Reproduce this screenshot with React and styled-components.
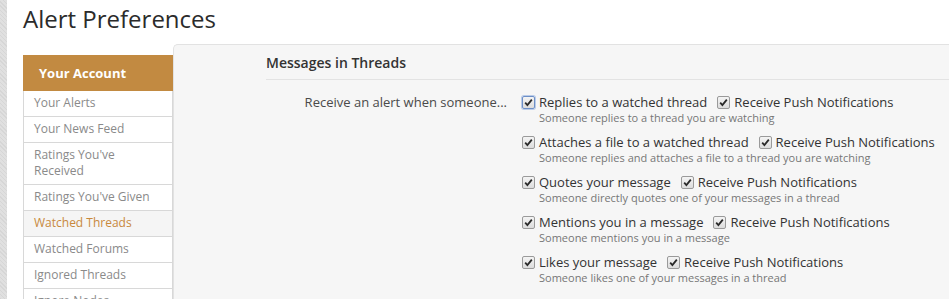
import React from 'react';
import styled, { createGlobalStyle } from 'styled-components';

const GlobalStyle = createGlobalStyle`
  html, body {
    margin: 0;
    padding: 0;
    background: #fff;
    font-family: "Open Sans", "Liberation Sans", sans-serif;
    overflow: hidden;
  }
`;

const Page = styled.div`
  display: flex;
  height: 299px;
  overflow: hidden;
`;

const Texture = styled.div`
  width: 7px;
  flex-shrink: 0;
  background: repeating-linear-gradient(45deg, #d6d6d6 0 1px, #e0e0e0 1px 3px);
`;

const Main = styled.div`
  flex: 1;
  padding: 0 0 0 16px;
  background: #fff;
  min-width: 0;
`;

const Title = styled.h1`
  margin: 0;
  padding: 2px 0 0;
  font-size: 24px;
  font-weight: 400;
  color: #2b2b2b;
  height: 42px;
  line-height: 34px;
`;

const Body = styled.div`
  display: flex;
  align-items: flex-start;
`;

const Sidebar = styled.div`
  width: 150px;
  flex-shrink: 0;
  margin-top: 11px;
`;

const SideHead = styled.div`
  background: #c28a41;
  color: #fff;
  font-weight: 700;
  font-size: 13px;
  height: 36px;
  line-height: 36px;
  padding-left: 16px;
`;

const SideItem = styled.div`
  border: 1px solid #d8d8d8;
  border-top: none;
  padding: 4px 10px 5px;
  font-size: 12px;
  line-height: 16px;
  white-space: nowrap;
  overflow: hidden;
  color: ${p => (p.$active ? '#c8893d' : '#8a8a8a')};
  background: ${p => (p.$active ? '#f5f5f5' : '#fff')};
`;

const SideText = styled.span`
  white-space: normal;
  display: inline-block;
  max-width: 128px;
`;

const Panel = styled.div`
  flex: 1;
  background: #f6f6f6;
  border: 1px solid #e2e2e2;
  border-right: none;
  border-radius: 5px 0 0 0;
  height: 260px;
  padding: 0 0 0 92px;
`;

const SectionHead = styled.h3`
  margin: 0;
  font-size: 14px;
  font-weight: 600;
  color: #333;
  padding: 7px 0 6px;
  line-height: 21px;
  border-bottom: 1px solid #e3e3e3;
`;

const FormRow = styled.div`
  display: flex;
  margin-top: 13px;
`;

const RowLabel = styled.div`
  width: 241px;
  text-align: right;
  font-size: 13px;
  color: #4a4a4a;
  line-height: 18px;
  padding-right: 15px;
  flex-shrink: 0;
`;

const Options = styled.div`
  display: flex;
  flex-direction: column;
  gap: 8px;
`;

const Option = styled.div`
  display: flex;
  flex-direction: column;
`;

const Line = styled.div`
  display: flex;
  align-items: center;
  height: 18px;
  font-size: 13px;
  color: #333;
  white-space: nowrap;
`;

const Box = styled.span`
  width: 11px;
  height: 11px;
  border: 1px solid ${p => (p.$focus ? '#6d8fc7' : '#9a9a9a')};
  box-shadow: ${p => (p.$focus ? '0 0 0 1px #b9cbe8' : 'none')};
  border-radius: 2px;
  background: linear-gradient(#f4f4f4, #dcdcdc);
  display: inline-flex;
  align-items: center;
  justify-content: center;
  margin-right: 4px;
  flex-shrink: 0;
`;

const Push = styled.span`
  display: inline-flex;
  align-items: center;
  margin-left: 10px;
`;

const Hint = styled.div`
  font-size: 11px;
  color: #777;
  line-height: 14px;
  padding-left: 17px;
`;

const Check = ({ focus }) => (
  <Box $focus={focus}>
    <svg width="9" height="9" viewBox="0 0 9 9">
      <path d="M1.2 4.6 L3.4 7 L7.8 1.6" fill="none" stroke="#2a2a2a" strokeWidth="1.8" />
    </svg>
  </Box>
);

const sideItems = [
  'Your Alerts',
  'Your News Feed',
  "Ratings You've Received",
  "Ratings You've Given",
  'Watched Threads',
  'Watched Forums',
  'Ignored Threads',
  'Ignore Nodes',
];

const options = [
  ['Replies to a watched thread', 'Someone replies to a thread you are watching'],
  ['Attaches a file to a watched thread', 'Someone replies and attaches a file to a thread you are watching'],
  ['Quotes your message', 'Someone directly quotes one of your messages in a thread'],
  ['Mentions you in a message', 'Someone mentions you in a message'],
  ['Likes your message', 'Someone likes one of your messages in a thread'],
];

export default function App() {
  return (
    <>
      <GlobalStyle />
      <Page>
        <Texture />
        <Main>
          <Title>Alert Preferences</Title>
          <Body>
            <Sidebar>
              <SideHead>Your Account</SideHead>
              {sideItems.map(item => (
                <SideItem key={item} $active={item === 'Watched Threads'}>
                  <SideText>{item}</SideText>
                </SideItem>
              ))}
            </Sidebar>
            <Panel>
              <SectionHead>Messages in Threads</SectionHead>
              <FormRow>
                <RowLabel>Receive an alert when someone...</RowLabel>
                <Options>
                  {options.map(([label, hint], i) => (
                    <Option key={label}>
                      <Line>
                        <Check focus={i === 0} />
                        {label}
                        <Push>
                          <Check />
                          Receive Push Notifications
                        </Push>
                      </Line>
                      <Hint>{hint}</Hint>
                    </Option>
                  ))}
                </Options>
              </FormRow>
            </Panel>
          </Body>
        </Main>
      </Page>
    </>
  );
}
